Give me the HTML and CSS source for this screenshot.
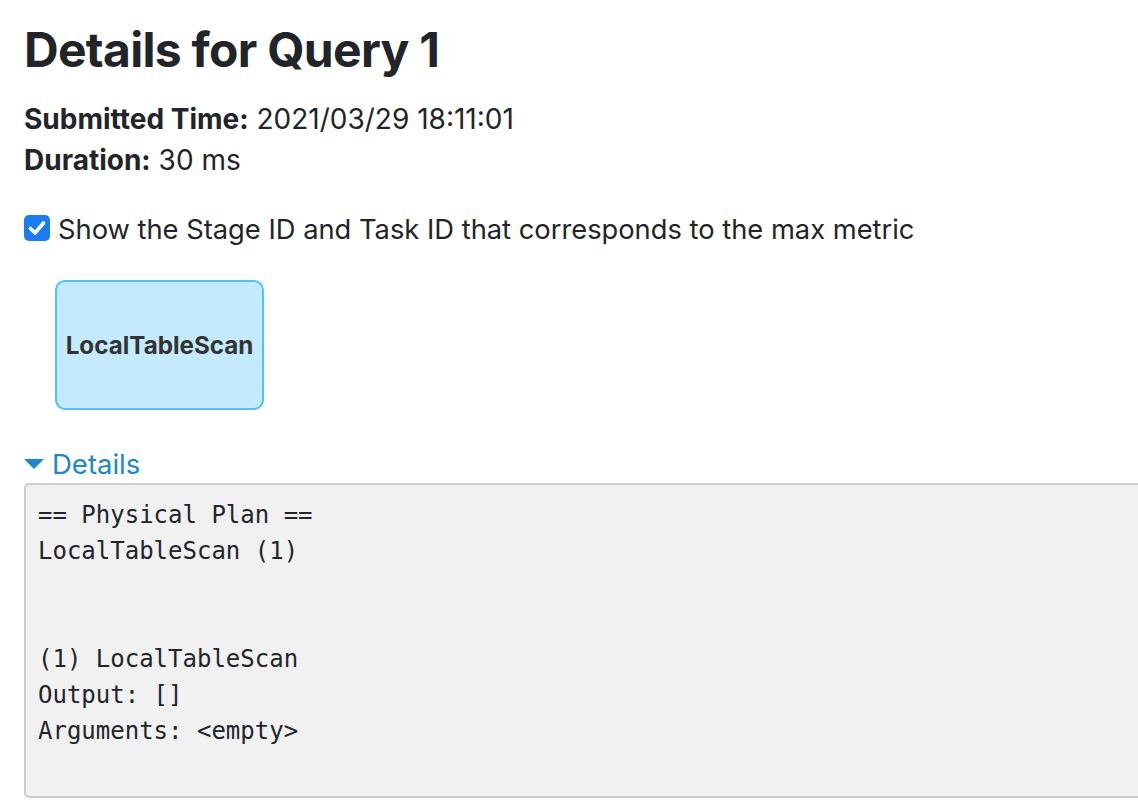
FILE: index.html
```html
<!DOCTYPE html>
<html>
<head>
<meta charset="utf-8">
<link rel="stylesheet" href="styles.css">
</head>
<body>
<div class="page">
  <h3 class="title">Details for Query 1</h3>
  <ul class="summary">
    <li><strong>Submitted Time:</strong> 2021/03/29 18:11:01</li>
    <li><strong>Duration:</strong> 30 ms</li>
  </ul>
  <label class="toggle">
    <span class="box"><svg viewBox="0 0 26 26" width="26" height="26"><path d="M6.5 13.5 L11 18 L19.5 8" fill="none" stroke="#fff" stroke-width="3.6" stroke-linecap="round" stroke-linejoin="round"/></svg></span>
    <span class="toggle-text">Show the Stage ID and Task ID that corresponds to the max metric</span>
  </label>
  <div class="plan-graph">
    <div class="node">LocalTableScan</div>
  </div>
  <div class="expander">
    <span class="arrow"></span><span class="expander-text">Details</span>
  </div>
  <pre class="plan">== Physical Plan ==
LocalTableScan (1)


(1) LocalTableScan
Output: []
Arguments: &lt;empty&gt;

</pre>
</div>
</body>
</html>
```

FILE: styles.css
```css
html, body {
  margin: 0;
  padding: 0;
  background: #ffffff;
  overflow: hidden;
}
body {
  font-family: Inter, "Liberation Sans", sans-serif;
  color: #212529;
}
.page {
  padding: 0 0 0 24px;
}
.title {
  font-size: 48px;
  font-weight: 700;
  line-height: 58px;
  margin: 0;
  padding-top: 21px;
  letter-spacing: -0.7px;
}
.summary {
  list-style: none;
  margin: 20px 0 0 0;
  padding: 0;
  font-size: 28px;
  line-height: 41px;
}
.summary strong {
  font-weight: 700;
}
.toggle {
  display: flex;
  align-items: flex-start;
  gap: 8px;
  margin-top: 31px;
  font-size: 27.3px;
  line-height: 36px;
}
.box {
  display: block;
  width: 26px;
  height: 26px;
  margin-top: 3px;
  border-radius: 5px;
  background: #1a7cf5;
}
.box svg {
  display: block;
}
.plan-graph {
  padding: 32px 0 0 31px;
}
.node {
  box-sizing: border-box;
  width: 209px;
  height: 130px;
  border: 2px solid #4ec3f5;
  border-radius: 10px;
  background: #c4eafd;
  display: flex;
  align-items: center;
  justify-content: center;
  font-weight: 700;
  font-size: 24.2px;
  color: #333333;
}
.expander {
  display: flex;
  align-items: center;
  gap: 8px;
  margin-top: 37px;
  font-size: 27.5px;
  line-height: 34px;
  color: #1a88cc;
}
.arrow {
  width: 0;
  height: 0;
  border-left: 10px solid transparent;
  border-right: 10px solid transparent;
  border-top: 10px solid #1a88cc;
}
.plan {
  margin: 2px 0 0 0;
  box-sizing: border-box;
  border: 2px solid #cccccc;
  border-right: none;
  border-radius: 5px 0 0 5px;
  background: #f1f1f1;
  padding: 12px 12px 11px 12px;
  font-family: "DejaVu Sans Mono", "Liberation Mono", monospace;
  font-size: 24px;
  line-height: 36px;
  color: #212529;
}
```
